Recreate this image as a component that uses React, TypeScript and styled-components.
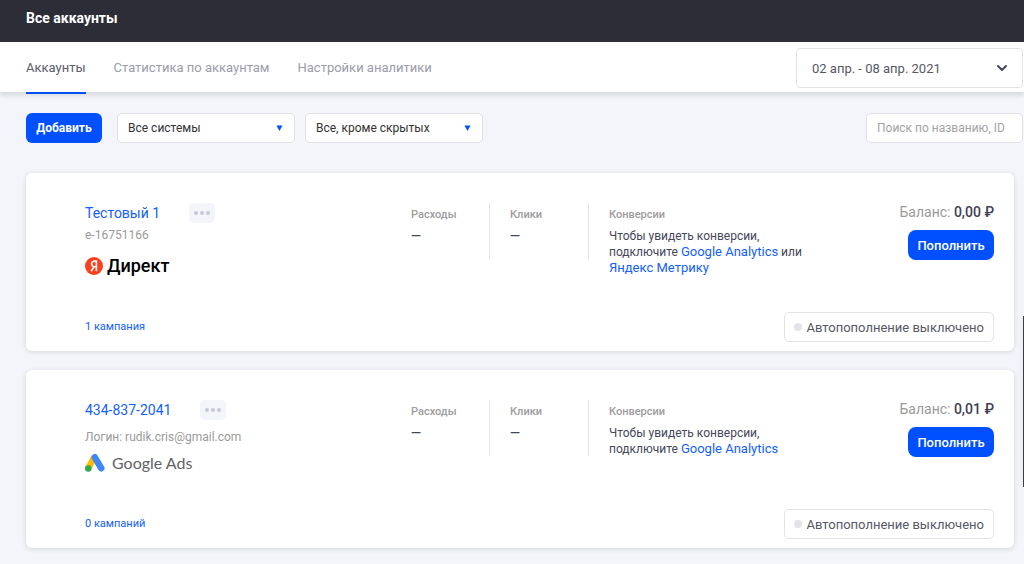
import React from "react";
import styled, { createGlobalStyle } from "styled-components";

const GlobalStyle = createGlobalStyle`
  *, *::before, *::after { box-sizing: border-box; }
  body {
    margin: 0;
    background: #f4f5fa;
    color: #44475a;
    font-family: Roboto, "Liberation Sans", sans-serif;
    font-size: 12px;
    line-height: 16px;
  }
  button, input, select { font-family: inherit; }
  a { color: #1260ff; text-decoration: none; }
`;

const Page = styled.div`
  min-height: 100vh;
  overflow-x: hidden;
`;

const TopBar = styled.header`
  height: 42px;
  padding: 8px 26px 0;
  background: #2d2d37;
  color: #fff;
`;

const PageTitle = styled.h1`
  margin: 0;
  font-size: 14px;
  line-height: 20px;
  font-weight: 700;
`;

const SubBar = styled.div`
  display: flex;
  justify-content: space-between;
  align-items: center;
  height: 50px;
  padding: 0 1px 0 26px;
  background: #fff;
  box-shadow: 0 4px 4px #dcdde2;
`;

const Tabs = styled.nav`
  display: flex;
  align-self: stretch;
  gap: 28px;
`;

const Tab = styled.a<{ $active?: boolean }>`
  height: 52px;
  font-size: 13px;
  line-height: 52px;
  color: ${(p) => (p.$active ? "#5a5c69" : "#9a9dab")};
  border-bottom: 2px solid ${(p) => (p.$active ? "#0050ff" : "transparent")};
`;

const DateButton = styled.button`
  display: flex;
  align-items: center;
  justify-content: space-between;
  width: 227px;
  height: 40px;
  margin-top: 2px;
  padding: 0 14px 0 15px;
  border: 1px solid #e2e3e6;
  border-radius: 4px;
  background: #fff;
  color: #555865;
  font-size: 13px;
`;

const Toolbar = styled.div`
  display: flex;
  align-items: center;
  padding: 21px 1px 0 26px;
`;

const PrimaryButton = styled.button<{ $bold?: boolean; $wide?: boolean }>`
  width: ${(p) => (p.$wide ? 86 : 76)}px;
  height: 30px;
  padding: 0;
  border: 0;
  border-radius: ${(p) => (p.$wide ? 8 : 6)}px;
  background: #0050ff;
  color: #fff;
  font-size: ${(p) => (p.$wide ? 13 : 12)}px;
  font-weight: ${(p) => (p.$bold ? 700 : 500)};
`;

const SelectBox = styled.div<{ $gap: number }>`
  display: grid;
  align-items: center;
  width: 178px;
  margin-left: ${(p) => p.$gap}px;

  > * { grid-area: 1 / 1; }
  > svg { justify-self: end; margin-right: 12px; pointer-events: none; }
`;

const Select = styled.select`
  appearance: none;
  width: 100%;
  height: 30px;
  padding: 0 24px 0 10px;
  border: 1px solid #e0e1e4;
  border-radius: 5px;
  background: #fff;
  color: #333;
  font-size: 12px;
`;

const Search = styled.input`
  width: 157px;
  height: 30px;
  margin-left: auto;
  padding: 0 10px;
  border: 1px solid #e0e1e4;
  border-radius: 5px;
  background: #fff;
  font-size: 12px;
  &::placeholder { color: #a3a3a3; opacity: 1; }
`;

const Cards = styled.main`
  display: flex;
  flex-direction: column;
  gap: 19px;
  padding: 30px 10px 16px 26px;
`;

const Card = styled.article`
  display: grid;
  grid-template-columns: 326px 78px 99px 1fr auto;
  grid-template-rows: 1fr auto;
  min-height: 178px;
  padding: 30px 20px 9px 59px;
  border-radius: 6px;
  background: #fff;
  box-shadow: 0 1px 5px #d3d4d9;
`;

const TitleRow = styled.div`
  display: flex;
  align-items: center;
  gap: 29px;
  height: 20px;
`;

const AccountName = styled.a`
  font-size: 14px;
  line-height: 20px;
`;

const MoreButton = styled.button`
  display: flex;
  align-items: center;
  justify-content: center;
  width: 26px;
  height: 20px;
  padding: 0;
  border: 0;
  border-radius: 5px;
  background: #f4f5fa;
`;

const AccountId = styled.div<{ $spaced?: boolean }>`
  margin: ${(p) => (p.$spaced ? "9px 0 8px" : "4px 0 13px")};
  color: #9a9a9a;
`;

const Brand = styled.div<{ $google?: boolean }>`
  display: flex;
  align-items: center;
  gap: ${(p) => (p.$google ? 7 : 4)}px;
  height: 20px;
  color: ${(p) => (p.$google ? "#5f6368" : "#000")};
  font-family: ${(p) => (p.$google ? "Lato" : "Roboto")}, sans-serif;
  font-size: ${(p) => (p.$google ? 16 : 18)}px;
  font-weight: ${(p) => (p.$google ? 400 : 500)};
  line-height: 20px;
`;

const Metric = styled.section<{ $divided?: boolean }>`
  align-self: start;
  min-height: 56px;
  padding-top: 4px;
  padding-left: ${(p) => (p.$divided ? 20 : 0)}px;
  border-left: ${(p) => (p.$divided ? "1px solid #e3e3e6" : "0")};
`;

const MetricLabel = styled.h2`
  margin: 0 0 5px;
  color: #9c9c9c;
  font-size: 11px;
  line-height: 16px;
  font-weight: 500;
`;

const Dash = styled.div`
  font-size: 13px;
  font-weight: 700;
`;

const Conversions = styled(Metric)`
  height: 56px;
`;

const Hint = styled.p`
  max-width: 200px;
  margin: 0;
  a { font-size: 13px; }
`;

const BalanceBox = styled.div`
  display: flex;
  flex-direction: column;
  align-items: flex-end;
  gap: 9px;
`;

const Balance = styled.div`
  color: #9a9a9a;
  font-size: 14px;
  line-height: 18px;
  strong { color: #3d4052; font-weight: 500; }
`;

const CardFooter = styled.footer`
  grid-column: 1 / -1;
  display: flex;
  align-items: center;
  justify-content: space-between;
  font-size: 11px;
`;

const AutoButton = styled.button`
  display: flex;
  align-items: center;
  gap: 4px;
  height: 30px;
  padding: 0 9px;
  border: 1px solid #e3e3e6;
  border-radius: 5px;
  background: #fff;
  color: #555865;
  font-size: 13px;
  &::before {
    content: "";
    width: 8px;
    height: 8px;
    border-radius: 50%;
    background: #e3e3ea;
  }
`;

const SideWidget = styled.aside`
  position: fixed;
  top: 56%;
  right: 0;
  width: 1px;
  height: 171px;
  background: #3a3c48;
  box-shadow: 0 0 6px #c5c6cc;
`;

const Triangle = () => (
  <svg width="7" height="6" viewBox="0 0 7 6" aria-hidden="true">
    <path d="M.5 .5h6L3.5 6z" fill="#0050ff" />
  </svg>
);

const Chevron = () => (
  <svg width="12" height="8" viewBox="0 0 12 8" aria-hidden="true">
    <path d="M2 2l4 4 4-4" fill="none" stroke="#44475a" strokeWidth="2" strokeLinecap="round" strokeLinejoin="round" />
  </svg>
);

const Dots = () => (
  <svg width="16" height="4" viewBox="0 0 16 4" fill="#c7c8d8" aria-hidden="true">
    <circle cx="2" cy="2" r="2" />
    <circle cx="8" cy="2" r="2" />
    <circle cx="14" cy="2" r="2" />
  </svg>
);

const YandexMark = () => (
  <svg width="18" height="18" viewBox="0 0 18 18" aria-hidden="true">
    <circle cx="9" cy="9" r="9" fill="#fc3f1d" />
    <path d="M11.4 14.2V4.1H9.8C7.8 4.1 6.6 5.3 6.6 6.9c0 1.5.8 2.3 2.3 2.9h2.5M9 9.8l-2.8 4.4" fill="none" stroke="#fff" strokeWidth="1.6" />
  </svg>
);

const AdsMark = () => (
  <svg width="20" height="20" viewBox="0 0 20 20" aria-hidden="true">
    <path d="M9.5 3.8L3.3 15.2" stroke="#fbbc04" strokeWidth="6.4" />
    <path d="M9.8 4.3l6.4 10.9" stroke="#4285f4" strokeWidth="6.6" strokeLinecap="round" />
    <circle cx="3.3" cy="15.5" r="3.3" fill="#34a853" />
  </svg>
);

type Account = {
  name: string;
  id: string;
  system: "yandex" | "google";
  balance: string;
  campaigns: string;
};

const accounts: Account[] = [
  { name: "Тестовый 1", id: "e-16751166", system: "yandex", balance: "0,00 ₽", campaigns: "1 кампания" },
  { name: "434-837-2041", id: "Логин: rudik.cris@gmail.com", system: "google", balance: "0,01 ₽", campaigns: "0 кампаний" },
];

const AccountCard = ({ account }: { account: Account }) => {
  const google = account.system === "google";
  return (
    <Card>
      <div>
        <TitleRow>
          <AccountName href="#">{account.name}</AccountName>
          <MoreButton type="button" aria-label="Ещё"><Dots /></MoreButton>
        </TitleRow>
        <AccountId $spaced={google}>{account.id}</AccountId>
        <Brand $google={google}>
          {google ? <AdsMark /> : <YandexMark />}
          <span>{google ? "Google Ads" : "Директ"}</span>
        </Brand>
      </div>
      <Metric>
        <MetricLabel>Расходы</MetricLabel>
        <Dash>—</Dash>
      </Metric>
      <Metric $divided>
        <MetricLabel>Клики</MetricLabel>
        <Dash>—</Dash>
      </Metric>
      <Conversions $divided>
        <MetricLabel>Конверсии</MetricLabel>
        <Hint>
          Чтобы увидеть конверсии, подключите <a href="#">Google Analytics</a>
          {!google && <> или <a href="#">Яндекс Метрику</a></>}
        </Hint>
      </Conversions>
      <BalanceBox>
        <Balance>Баланс: <strong>{account.balance}</strong></Balance>
        <PrimaryButton type="button" $wide>Пополнить</PrimaryButton>
      </BalanceBox>
      <CardFooter>
        <a href="#">{account.campaigns}</a>
        <AutoButton type="button">Автопополнение выключено</AutoButton>
      </CardFooter>
    </Card>
  );
};

export default function App() {
  return (
    <Page>
      <GlobalStyle />
      <TopBar><PageTitle>Все аккаунты</PageTitle></TopBar>
      <SubBar>
        <Tabs>
          <Tab href="#" $active>Аккаунты</Tab>
          <Tab href="#">Статистика по аккаунтам</Tab>
          <Tab href="#">Настройки аналитики</Tab>
        </Tabs>
        <DateButton type="button">02 апр. - 08 апр. 2021<Chevron /></DateButton>
      </SubBar>
      <Toolbar>
        <PrimaryButton type="button" $bold>Добавить</PrimaryButton>
        <SelectBox $gap={15}>
          <Select aria-label="Система"><option>Все системы</option></Select>
          <Triangle />
        </SelectBox>
        <SelectBox $gap={10}>
          <Select aria-label="Видимость"><option>Все, кроме скрытых</option></Select>
          <Triangle />
        </SelectBox>
        <Search type="text" aria-label="Поиск" placeholder="Поиск по названию, ID" />
      </Toolbar>
      <Cards>
        {accounts.map((a) => <AccountCard key={a.name} account={a} />)}
      </Cards>
      <SideWidget />
    </Page>
  );
}
